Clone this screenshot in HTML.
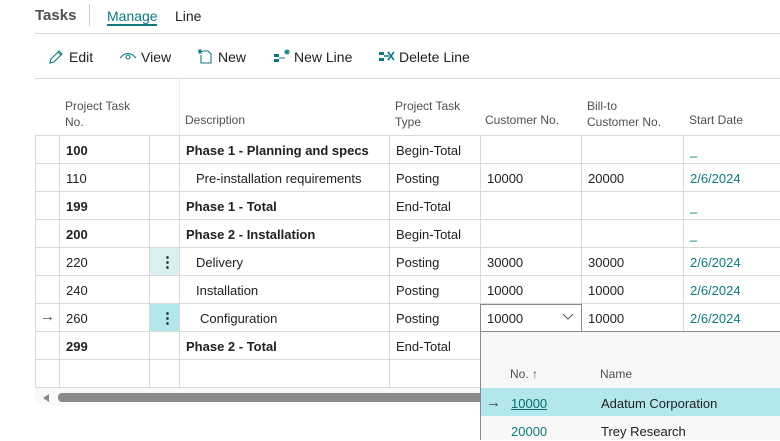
<!DOCTYPE html>
<html><head><style>
*{margin:0;padding:0;box-sizing:border-box}
body{width:780px;height:440px;overflow:hidden;background:#fff;font-family:"Liberation Sans",sans-serif;color:#212121;position:relative;font-size:13px}
.a{position:absolute;white-space:nowrap}
.h{color:#505050;font-size:12px;line-height:16px}
.b{font-weight:bold}
.t{color:#0e7a80}
.hl{position:absolute;height:1px;background:#dadada}
.vl{position:absolute;width:1px;background:#dadada}
.tb{position:absolute;top:49px;font-size:14px;color:#212121}
.r{margin-top:1px}
</style></head><body>
<div class="a" style="left:35px;top:7px;font-size:15px;font-weight:bold;color:#505050">Tasks</div>
<div class="vl" style="left:89px;top:4px;height:22px;background:#ccc"></div>
<div class="a" style="left:107px;top:8px;font-size:14px;color:#0e7a80">Manage</div>
<div style="position:absolute;left:107px;top:24px;width:50px;height:2px;background:#0e7a80"></div>
<div class="a" style="left:175px;top:8px;font-size:14px">Line</div>
<div class="hl" style="left:35px;top:33px;width:745px"></div>

<svg class="a" style="left:48px;top:49px" width="16" height="16" viewBox="0 0 16 16"><path d="M2 14l1-4 8-8 3 3-8 8z M10 3l3 3" fill="none" stroke="#0e7a80" stroke-width="1.1"/></svg>
<div class="tb" style="left:69px">Edit</div>
<svg class="a" style="left:119px;top:50px" width="18" height="12" viewBox="0 0 18 12"><path d="M1 8Q9 -1 17 8" fill="none" stroke="#0e7a80" stroke-width="1.1"/><circle cx="9" cy="7" r="2" fill="none" stroke="#0e7a80" stroke-width="1.1"/></svg>
<div class="tb" style="left:141px">View</div>
<svg class="a" style="left:197px;top:48px" width="16" height="16" viewBox="0 0 16 16"><path d="M6 3h5l3 3v9H4V7" fill="none" stroke="#0e7a80" stroke-width="1.1"/><path d="M3 1v5M1 3.5h5M1.5 1.5l3 4M4.5 1.5l-3 4" stroke="#0e7a80" stroke-width="0.9"/></svg>
<div class="tb" style="left:218px">New</div>
<svg class="a" style="left:273px;top:48px" width="18" height="16" viewBox="0 0 18 16"><rect x="1" y="6" width="5" height="3" fill="#0e7a80"/><rect x="1" y="11" width="5" height="3" fill="#0e7a80"/><path d="M6 10h6" stroke="#0e7a80"/><path d="M14 1v6M11 4h6M12 2l4 4M16 2l-4 4" stroke="#0e7a80" stroke-width="0.9"/></svg>
<div class="tb" style="left:294px">New Line</div>
<svg class="a" style="left:378px;top:48px" width="18" height="16" viewBox="0 0 18 16"><rect x="1" y="4" width="5" height="3" fill="#0e7a80"/><rect x="1" y="10" width="5" height="3" fill="#0e7a80"/><path d="M6 8h5M10 4l6 8M16 4l-6 8" stroke="#0e7a80" stroke-width="1.6"/></svg>
<div class="tb" style="left:399px">Delete Line</div>
<div class="hl" style="left:35px;top:78px;width:745px"></div>

<div class="a h" style="left:65px;top:98px">Project Task<br>No.</div>
<div class="a h" style="left:185px;top:112px">Description</div>
<div class="a h" style="left:395px;top:98px">Project Task<br>Type</div>
<div class="a h" style="left:485px;top:112px">Customer No.</div>
<div class="a h" style="left:587px;top:98px">Bill-to<br>Customer No.</div>
<div class="a h" style="left:689px;top:112px">Start Date</div>
<div class="vl" style="left:179px;top:79px;height:56px;background:#ececec"></div>

<div class="hl" style="left:35px;top:135px;width:745px"></div>
<div class="hl" style="left:35px;top:163px;width:745px"></div>
<div class="hl" style="left:35px;top:191px;width:745px"></div>
<div class="hl" style="left:35px;top:219px;width:745px"></div>
<div class="hl" style="left:35px;top:247px;width:745px"></div>
<div class="hl" style="left:35px;top:275px;width:745px"></div>
<div class="hl" style="left:35px;top:303px;width:745px"></div>
<div class="hl" style="left:35px;top:331px;width:445px"></div>
<div class="hl" style="left:35px;top:359px;width:445px"></div>
<div class="hl" style="left:35px;top:387px;width:445px"></div>
<div class="vl" style="left:35px;top:135px;height:253px"></div>
<div class="vl" style="left:59px;top:135px;height:253px"></div>
<div class="vl" style="left:149px;top:135px;height:253px"></div>
<div class="vl" style="left:179px;top:135px;height:253px"></div>
<div class="vl" style="left:389px;top:135px;height:253px"></div>
<div class="vl" style="left:480px;top:135px;height:196px"></div>
<div class="vl" style="left:581px;top:135px;height:196px"></div>
<div class="vl" style="left:683px;top:135px;height:196px"></div>

<div style="position:absolute;left:150px;top:248px;width:29px;height:27px;background:#d9eff1"></div>
<div style="position:absolute;left:150px;top:304px;width:29px;height:27px;background:#b2e8ec"></div>
<div class="a" style="left:160px;top:253px;font-size:15px;font-weight:bold">⋮</div>
<div class="a" style="left:160px;top:309px;font-size:15px;font-weight:bold">⋮</div>

<div style="position:absolute;left:0;top:1px;width:780px;height:440px">
<div class="a b" style="left:66px;top:142px">100</div><div class="a b" style="left:186px;top:142px">Phase 1 - Planning and specs</div><div class="a" style="left:396px;top:142px">Begin-Total</div><div class="a t" style="left:690px;top:142px">_</div>
<div class="a" style="left:66px;top:170px">110</div><div class="a" style="left:196px;top:170px">Pre-installation requirements</div><div class="a" style="left:396px;top:170px">Posting</div><div class="a" style="left:487px;top:170px">10000</div><div class="a" style="left:588px;top:170px">20000</div><div class="a t" style="left:690px;top:170px">2/6/2024</div>
<div class="a b" style="left:66px;top:198px">199</div><div class="a b" style="left:186px;top:198px">Phase 1 - Total</div><div class="a" style="left:396px;top:198px">End-Total</div><div class="a t" style="left:690px;top:198px">_</div>
<div class="a b" style="left:66px;top:226px">200</div><div class="a b" style="left:186px;top:226px">Phase 2 - Installation</div><div class="a" style="left:396px;top:226px">Begin-Total</div><div class="a t" style="left:690px;top:226px">_</div>
<div class="a" style="left:66px;top:254px">220</div><div class="a" style="left:196px;top:254px">Delivery</div><div class="a" style="left:396px;top:254px">Posting</div><div class="a" style="left:487px;top:254px">30000</div><div class="a" style="left:588px;top:254px">30000</div><div class="a t" style="left:690px;top:254px">2/6/2024</div>
<div class="a" style="left:66px;top:282px">240</div><div class="a" style="left:196px;top:282px">Installation</div><div class="a" style="left:396px;top:282px">Posting</div><div class="a" style="left:487px;top:282px">10000</div><div class="a" style="left:588px;top:282px">10000</div><div class="a t" style="left:690px;top:282px">2/6/2024</div>
<div class="a" style="left:40px;top:307px;color:#555;font-size:15px">→</div><div class="a" style="left:66px;top:310px">260</div><div class="a" style="left:200px;top:310px">Configuration</div><div class="a" style="left:396px;top:310px">Posting</div>
</div>
<div style="position:absolute;left:480px;top:304px;width:102px;height:28px;border:1px solid #8a8a8a"></div>
<div class="a" style="left:487px;top:311px">10000</div>
<svg class="a" style="left:562px;top:313px" width="12" height="8" viewBox="0 0 12 8"><path d="M1 1l5 5 5-5" fill="none" stroke="#555" stroke-width="1"/></svg>
<div class="a" style="left:588px;top:311px">10000</div><div class="a t" style="left:690px;top:311px">2/6/2024</div>
<div class="a b" style="left:66px;top:339px">299</div><div class="a b" style="left:186px;top:339px">Phase 2 - Total</div><div class="a" style="left:396px;top:339px">End-Total</div>

<div style="position:absolute;left:35px;top:388px;width:445px;height:17px;background:#fafafa"></div>
<svg class="a" style="left:42px;top:393px" width="8" height="10" viewBox="0 0 8 10"><path d="M7 1v8L1 5z" fill="#888"/></svg>
<div style="position:absolute;left:58px;top:393px;width:430px;height:9px;border-radius:4px;background:#8a8a8a"></div>

<div style="position:absolute;left:480px;top:331px;width:300px;height:109px;background:#f8f8f8;border-left:1px solid #8a8a8a;border-top:1px solid #8a8a8a"></div>
<div class="a h" style="left:510px;top:366px">No. ↑</div>
<div class="a h" style="left:600px;top:366px">Name</div>
<div style="position:absolute;left:481px;top:388px;width:299px;height:28px;background:#b2e8ec"></div>
<div class="a" style="left:486px;top:394px;color:#444;font-size:15px">→</div>
<div class="a" style="left:511px;top:396px;color:#0e6b70;text-decoration:underline">10000</div>
<div class="a" style="left:601px;top:396px">Adatum Corporation</div>
<div class="a t" style="left:511px;top:424px">20000</div>
<div class="a" style="left:601px;top:424px">Trey Research</div>
</body></html>
